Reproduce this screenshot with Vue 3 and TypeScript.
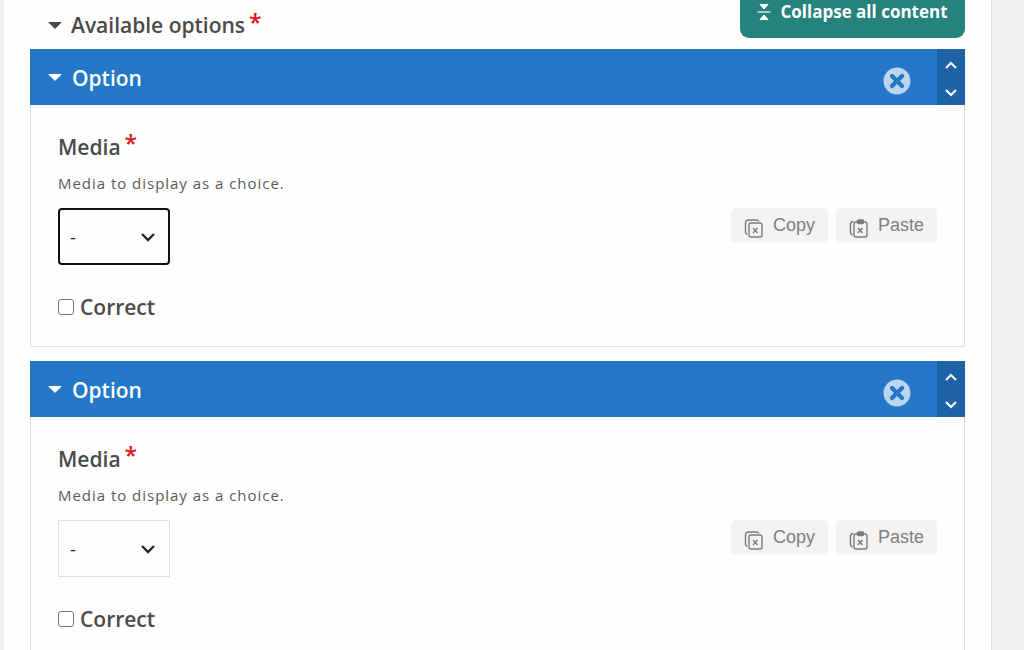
<template>
  <div class="page">
    <div class="sheet">
      <div class="top-row">
        <div class="group-title">
          <span class="caret dark"></span>
          <span>Available options</span>
          <span class="req">*</span>
        </div>
        <button type="button" class="collapse-btn">
          <svg width="14" height="18" viewBox="0 0 14 18" aria-hidden="true">
            <path d="M3 1.500h8L7 6z M3 16.500h8L7 12z" fill="#fff" stroke="#fff" stroke-width="1" />
            <path d="M0.500 9h13" stroke="#fff" stroke-width="1.200" />
          </svg>
          Collapse all content
        </button>
      </div>

      <section v-for="(opt, i) in options" :key="opt.id" class="option">
        <header class="opt-head">
          <span class="caret light"></span>
          <span class="opt-title">Option</span>
          <svg class="remove" width="28" height="28" viewBox="0 0 28 28" aria-label="Remove">
            <circle cx="14" cy="14" r="13.500" fill="#bcd6f0" />
            <path d="M9 9l10 10M19 9L9 19" stroke="#2578c8" stroke-width="4.400" stroke-linecap="round" />
          </svg>
          <div class="order">
            <svg width="14" height="9" viewBox="0 0 14 9"><path d="M2 7l5-5 5 5" fill="none" stroke="#fff" stroke-width="2" /></svg>
            <svg width="14" height="9" viewBox="0 0 14 9"><path d="M2 2l5 5 5-5" fill="none" stroke="#fff" stroke-width="2" /></svg>
          </div>
        </header>
        <div class="opt-body" :class="{ last: i === options.length - 1 }">
          <div class="label">Media <span class="req">*</span></div>
          <div class="hint">Media to display as a choice.</div>
          <div class="media-row">
            <div class="select" :class="{ focused: opt.focused }">
              <span>-</span>
              <svg width="16" height="10" viewBox="0 0 16 10"><path d="M2 2l6 6 6-6" fill="none" stroke="#1a2430" stroke-width="2.400" /></svg>
            </div>
            <div class="clip-btns">
              <button type="button" class="clip-btn">
                <svg width="20" height="20" viewBox="0 0 20 20" fill="none" stroke="#7d7d7d" stroke-width="1.400">
                  <rect x="5" y="5" width="13" height="14" rx="2" />
                  <path d="M3.500 16.500C2 16 1.500 15 1.500 14V5c0-2 1-3 3-3h8c1 0 2 .5 2.500 1.500" />
                  <path d="M9 10l4.500 5M13.500 10L9 15" />
                </svg>
                Copy
              </button>
              <button type="button" class="clip-btn">
                <svg width="20" height="20" viewBox="0 0 20 20" fill="none" stroke="#7d7d7d" stroke-width="1.400">
                  <rect x="5" y="4" width="13" height="15" rx="2" />
                  <rect x="8.500" y="2" width="6" height="3.500" rx="1" fill="#7d7d7d" />
                  <path d="M3.500 17C2 16.500 1.500 15.500 1.500 14.500V6c0-1.500 1-2.500 3-2.500" />
                  <path d="M9 10l4.500 5M13.500 10L9 15" />
                </svg>
                Paste
              </button>
            </div>
          </div>
          <label class="check">
            <span class="box"></span>
            Correct
          </label>
        </div>
      </section>
    </div>
  </div>
</template>

<script setup lang="ts">
interface OptionItem {
  id: number
  focused: boolean
}

const options: OptionItem[] = [
  { id: 1, focused: true },
  { id: 2, focused: false },
]
</script>

<style>
html, body { margin: 0; background: #f0f0f0; }
</style>

<style scoped>
.page {
  height: 650px;
  overflow: hidden;
  padding: 0 32px 0 4px;
  background: #f0f0f0;
  font-family: "Open Sans", sans-serif;
}
.sheet {
  background: #fefefe;
  border-right: 1px solid #dcdcdc;
  padding: 0 26px;
  height: 100%;
}
.top-row {
  display: flex;
  justify-content: space-between;
  align-items: flex-start;
  height: 49px;
}
.group-title {
  display: flex;
  align-items: center;
  margin: 12px 0 0 18px;
  font-size: 21px;
  font-weight: 600;
  line-height: 26px;
  color: #4a4a4a;
}
.caret {
  width: 0;
  height: 0;
  border-left: 7px solid transparent;
  border-right: 7px solid transparent;
  margin-right: 10px;
}
.caret.dark { border-top: 7px solid #4a4a4a; margin-right: 9px; }
.caret.light { border-top: 7px solid #fff; }
.req {
  color: #dc1420;
  margin-left: 4px;
  margin-top: -1px;
  font-size: 23px;
  line-height: 1;
  align-self: flex-start;
}
.collapse-btn {
  display: flex;
  align-items: center;
  justify-content: center;
  gap: 9px;
  width: 225px;
  height: 38px;
  padding: 0 0 15px;
  border: 0;
  border-radius: 0 0 9px 9px;
  background: #26827c;
  color: #fff;
  font: 700 17px "Open Sans", sans-serif;
}
.option { margin-bottom: 14px; }
.opt-head {
  display: flex;
  align-items: center;
  height: 56px;
  padding-left: 18px;
  background: #2578c8;
  color: #fff;
}
.opt-title { font-size: 21px; font-weight: 600; flex: 1; padding-top: 1px; }
.remove { margin: 8px 26px 0 0; }
.order {
  width: 28px;
  align-self: stretch;
  background: #1f63a7;
  display: flex;
  flex-direction: column;
  align-items: center;
  justify-content: space-between;
  padding: 12px 0 8px;
  box-sizing: border-box;
}
.opt-body {
  border: 1px solid #dedede;
  border-top: 0;
  height: 242px;
  box-sizing: border-box;
  padding: 27px 27px 0;
}
.opt-body.last { height: 300px; }
.label {
  font-size: 21px;
  font-weight: 600;
  line-height: 30px;
  color: #4a4a4a;
  display: flex;
}
.label .req { margin-top: 0; }
.hint {
  margin-top: 11px;
  font-size: 15px;
  line-height: 20px;
  letter-spacing: .97px;
  color: #5b5b5b;
}
.media-row {
  display: flex;
  justify-content: space-between;
  align-items: flex-start;
  margin-top: 15px;
}
.select {
  display: flex;
  align-items: center;
  justify-content: space-between;
  box-sizing: border-box;
  width: 111.500px;
  height: 57px;
  padding: 0 13px 0 11px;
  border: 1px solid #e4dfe4;
  background: #fefefe;
  font-size: 18px;
  color: #222;
}
.select.focused {
  border: 2px solid #111;
  border-radius: 4px;
  padding: 0 12px 0 10px;
}
.clip-btns { display: flex; gap: 8px; }
.clip-btn {
  display: flex;
  align-items: center;
  gap: 9px;
  height: 35px;
  padding: 0 13px;
  border: 0;
  border-radius: 5px;
  background: #f3f3f3;
  color: #808080;
  font: 18px "Liberation Sans", sans-serif;
}
.clip-btn svg { margin-top: 4px; }
.check {
  display: flex;
  align-items: center;
  margin-top: 27px;
  font-size: 21px;
  font-weight: 600;
  line-height: 30px;
  color: #4a4a4a;
}
.box {
  box-sizing: border-box;
  width: 16px;
  height: 16px;
  margin-right: 6px;
  border: 1.500px solid #767676;
  border-radius: 3px;
  background: #fff;
}
</style>
